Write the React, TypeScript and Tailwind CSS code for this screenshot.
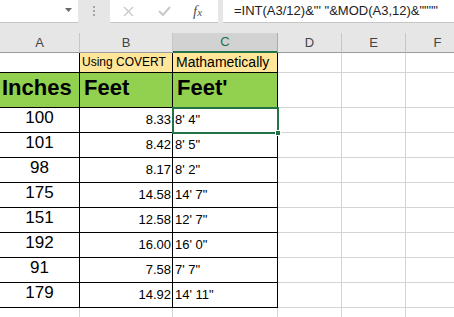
import React from "react";

const rows = [
  { a: "100", b: "8.33", c: "8' 4\"" },
  { a: "101", b: "8.42", c: "8' 5\"" },
  { a: "98", b: "8.17", c: "8' 2\"" },
  { a: "175", b: "14.58", c: "14' 7\"" },
  { a: "151", b: "12.58", c: "12' 7\"" },
  { a: "192", b: "16.00", c: "16' 0\"" },
  { a: "91", b: "7.58", c: "7' 7\"" },
  { a: "179", b: "14.92", c: "14' 11\"" },
];

const cols = ["A", "B", "C", "D", "E", "F"];

// gray gridline cells for D, E, F
const Blank = () => (
  <>
    <div className="border-r border-b border-[#d4d4d4]" />
    <div className="border-r border-b border-[#d4d4d4]" />
    <div className="border-r border-b border-[#d4d4d4]" />
  </>
);

const FormulaBar: React.FC = () => (
  <div className="flex h-[23px]">
    <div className="relative w-[78px] bg-white border-b border-[#c6c6c6]">
      <svg className="absolute left-[65px] top-[8px]" width="7" height="4" viewBox="0 0 7 4">
        <path d="M0 0 L7 0 L3.5 4 Z" fill="#6a6a6a" />
      </svg>
    </div>
    <div className="flex w-[32px] flex-col items-center gap-[2px] pt-[6px]">
      <div className="h-[2px] w-[2px] bg-[#a6a6a6]" />
      <div className="h-[2px] w-[2px] bg-[#a6a6a6]" />
      <div className="h-[2px] w-[2px] bg-[#a6a6a6]" />
    </div>
    <div className="flex w-[108px] items-center bg-white border-b border-[#c6c6c6]">
      <svg className="ml-[13px]" width="11" height="11" viewBox="0 0 11 11">
        <path d="M1 1 L10 10 M10 1 L1 10" stroke="#c8c8c8" strokeWidth="1.3" />
      </svg>
      <svg className="ml-[24px]" width="13" height="10" viewBox="0 0 13 10">
        <path d="M1 5 L5 9 L12 1" stroke="#c8c8c8" strokeWidth="2" fill="none" />
      </svg>
      <span className="ml-[22px] font-['Liberation_Serif',serif] text-[15px] italic leading-none text-[#555]">
        f<span className="text-[11px]">x</span>
      </span>
    </div>
    <div className="ml-[5px] flex flex-1 items-center bg-white border-b border-[#c6c6c6] pl-[11px] text-[13px] text-[#222]">
      =INT(A3/12)&amp;"' "&amp;MOD(A3,12)&amp;""""
    </div>
  </div>
);

export default function App() {
  return (
    <div className="relative h-[317px] w-[454px] overflow-hidden bg-[#e6e6e6] font-['Liberation_Sans',Arial,sans-serif] text-black">
      <FormulaBar />
      <div className="h-[10px]" />

      <div className="relative bg-white">
        <div className="grid grid-cols-[80px_93px_105px_64px_64px_64px] grid-rows-[20px_20px_35px_repeat(8,25px)_25px]">
          {/* column headers */}
          {cols.map((c) =>
            c === "C" ? (
              <div
                key={c}
                className="flex items-center justify-center border-r border-[#ababab] bg-[#d2d2d2] border-b-2 border-b-[#217346] text-[13px] text-[#217346]"
              >
                {c}
              </div>
            ) : (
              <div
                key={c}
                className="flex items-center justify-center border-r border-b border-r-[#c6c6c6] border-b-[#9b9b9b] bg-[#e6e6e6] text-[13px] text-[#444]"
              >
                {c}
              </div>
            )
          )}

          {/* row 1 */}
          <div className="border-r border-b border-r-black border-b-black" />
          <div className="flex items-end border-r border-b border-black bg-[#ffe699] pb-[1px] pl-[2px] text-[12px]">
            Using COVERT
          </div>
          <div className="flex items-end border-r border-b border-black bg-[#ffe699] pb-[1px] pl-[3px] text-[14px] leading-[18px]">
            Mathametically
          </div>
          <Blank />

          {/* row 2 */}
          <div className="flex items-end border-r border-b border-black bg-[#92d050] pb-[3px] pl-[2px] text-[22px] font-bold">
            Inches
          </div>
          <div className="flex items-end border-r border-b border-black bg-[#92d050] pb-[3px] pl-[4px] text-[22px] font-bold">
            Feet
          </div>
          <div className="flex items-end border-r border-b border-black bg-[#92d050] pb-[3px] pl-[4px] text-[22px] font-bold">
            Feet'
          </div>
          <Blank />

          {rows.map((r) => (
            <React.Fragment key={r.a + r.b}>
              <div className="flex items-end justify-center border-r border-b border-black pb-[2px] text-[17px]">
                {r.a}
              </div>
              <div className="flex items-end justify-end border-r border-b border-black pb-[3px] pr-[1px] text-[13px]">
                {r.b}
              </div>
              <div className="flex items-end border-r border-b border-black pb-[3px] pl-[2px] text-[13px]">
                {r.c}
              </div>
              <Blank />
            </React.Fragment>
          ))}

          {/* trailing row */}
          <div className="border-r border-[#d4d4d4]" />
          <div className="border-r border-[#d4d4d4]" />
          <div className="border-r border-[#d4d4d4]" />
          <div className="border-r border-[#d4d4d4]" />
          <div className="border-r border-[#d4d4d4]" />
          <div className="border-r border-[#d4d4d4]" />
        </div>

        {/* active cell C3 */}
        <div className="pointer-events-none absolute left-[172px] top-[74px] h-[27px] w-[107px] border-2 border-[#217346]">
          <div className="absolute -bottom-[4px] -right-[4px] h-[6px] w-[6px] border border-white bg-[#217346]" />
        </div>
      </div>
    </div>
  );
}
